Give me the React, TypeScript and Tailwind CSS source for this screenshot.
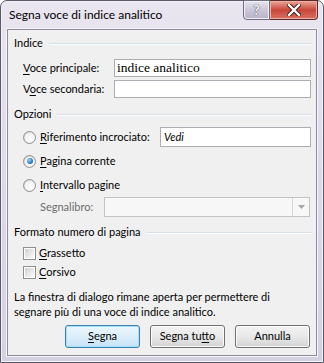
import React from 'react';

const font = "font-['Lato',sans-serif]";

function GroupHeader({ label }: { label: string }) {
  return (
    <div className="flex h-[16px] items-center pl-[6px] pr-[4px]">
      <span className="text-[11px] text-black">{label}</span>
      <div className="ml-[6px] flex-1 border-t border-[#d5dfe5] shadow-[0_1px_0_#ffffff]" />
    </div>
  );
}

function Radio({ checked }: { checked?: boolean }) {
  return (
    <div className="flex h-[13px] w-[13px] flex-none items-center justify-center rounded-full border border-[#929292] bg-gradient-to-br from-[#cfcfcf] to-[#fbfbfb]">
      <div className="flex h-[9px] w-[9px] items-center justify-center rounded-full bg-gradient-to-br from-[#f0f0f0] to-[#ffffff]">
        {checked && (
          <div className="h-[6px] w-[6px] rounded-full bg-[radial-gradient(circle_at_35%_35%,#9fd4fb,#2a78c2_60%,#0e4a86)]" />
        )}
      </div>
    </div>
  );
}

function Checkbox() {
  return (
    <div className="flex h-[13px] w-[13px] flex-none items-center justify-center border border-[#8e8f8f] bg-white">
      <div className="h-[9px] w-[9px] bg-gradient-to-br from-[#d2d2d2] to-[#fafafa]" />
    </div>
  );
}

function Key({ pre, k, post }: { pre?: string; k: string; post?: string }) {
  return (
    <span className="whitespace-nowrap">
      {pre}
      <span className="underline underline-offset-[2px]">{k}</span>
      {post}
    </span>
  );
}

function Button({ children, primary }: { children: React.ReactNode; primary?: boolean }) {
  return (
    <div
      className={
        'flex h-[23px] w-[75px] items-center justify-center rounded-[3px] border text-[11px] text-black ' +
        (primary
          ? 'border-[#3c7fb1] bg-gradient-to-b from-[#ebf6fd] via-[#dceefa] to-[#c4e3f7] shadow-[inset_0_0_0_1px_#a6e0ff]'
          : 'border-[#707070] bg-gradient-to-b from-[#f2f2f2] via-[#e9e9e9] to-[#d3d3d3] shadow-[inset_0_0_0_1px_#fcfcfc]')
      }
    >
      {children}
    </div>
  );
}

export default function App() {
  return (
    <div className={`h-[363px] w-[324px] bg-white ${font}`}>
      <div className="flex h-full w-full flex-col rounded-t-[7px] border border-[#59596a] bg-gradient-to-b from-[#e9e6f0] via-[#ddd9e7] to-[#d6d1e2] shadow-[inset_0_0_0_1px_#f4f2f8]">
        {/* Title bar */}
        <div className="relative flex h-[28px] items-center pl-[8px]">
          <span className="text-[12px] text-black">Segna voce di indice analitico</span>
          <div className="absolute right-[5px] top-[-1px] flex h-[20px]">
            <div className="flex w-[27px] items-center justify-center rounded-bl-[4px] border border-[#6f6c7e] bg-gradient-to-b from-[#e6e3ee] via-[#cbc7d8] to-[#b7b2c8] shadow-[inset_0_0_0_1px_#f2f0f7]">
              <span className="text-[14px] font-bold leading-none text-[#f5f5f8] [text-shadow:0_0_1px_#4a4a5a,0_0_1px_#4a4a5a]">?</span>
            </div>
            <div className="flex w-[48px] items-center justify-center rounded-br-[4px] border border-l-0 border-[#5b2a28] bg-gradient-to-b from-[#e8a596] via-[#c9453a] to-[#d7705f] shadow-[inset_0_0_0_1px_#eeb0a4]">
              <svg width="14" height="12" viewBox="0 0 14 12">
                <path d="M2 1 L12 11 M12 1 L2 11" stroke="#3a1512" strokeWidth="4.2" strokeLinecap="square" />
                <path d="M2 1 L12 11 M12 1 L2 11" stroke="#ffffff" strokeWidth="2.4" strokeLinecap="square" />
              </svg>
            </div>
          </div>
        </div>

        {/* Client area */}
        <div className="mx-[6px] mb-[6px] flex flex-1 flex-col border border-[#8d8b9b] bg-[#f0f0f0] text-[11px] text-black shadow-[0_0_0_1px_#f7f6fa]">
          <div className="mt-[5px]">
            <GroupHeader label="Indice" />
          </div>

          <div className="mt-[7px] flex h-[20px] items-center pl-[15px] pr-[5px]">
            <span className="w-[91px] flex-none"><Key k="V" post="oce principale:" /></span>
            <div className="flex h-[18px] flex-1 items-center border border-[#abadb3] bg-white pl-[2px] font-['Liberation_Serif',serif] text-[13.5px]">
              indice analitico
            </div>
          </div>
          <div className="mt-[1px] flex h-[20px] items-center pl-[15px] pr-[5px]">
            <span className="w-[91px] flex-none"><Key pre="V" k="o" post="ce secondaria:" /></span>
            <div className="h-[18px] flex-1 border border-[#abadb3] bg-white" />
          </div>

          <div className="mt-[7px]">
            <GroupHeader label="Opzioni" />
          </div>

          <div className="mt-[5px] flex h-[20px] items-center pl-[15px] pr-[5px]">
            <Radio />
            <span className="ml-[4px] w-[120px] flex-none"><Key k="R" post="iferimento incrociato:" /></span>
            <div className="flex h-[20px] flex-1 items-center border border-[#abadb3] bg-white pl-[3px] italic">
              Vedi
            </div>
          </div>
          <div className="mt-[4px] flex h-[20px] items-center pl-[15px]">
            <Radio checked />
            <span className="ml-[4px]"><Key k="P" post="agina corrente" /></span>
          </div>
          <div className="mt-[4px] flex h-[20px] items-center pl-[15px]">
            <Radio />
            <span className="ml-[4px]"><Key k="I" post="ntervallo pagine" /></span>
          </div>
          <div className="mt-[2px] flex h-[20px] items-center pl-[32px] pr-[6px]">
            <span className="w-[64px] flex-none text-[#6d6d6d]">Segnalibro:</span>
            <div className="flex h-[20px] flex-1 border border-[#c3c3c3] bg-[#f7f7f7]">
              <div className="flex-1" />
              <div className="flex w-[17px] items-center justify-center border-l border-[#d6d6d6]">
                <svg width="7" height="4" viewBox="0 0 7 4">
                  <path d="M0 0 H7 L3.5 4 Z" fill="#a8a8a8" />
                </svg>
              </div>
            </div>
          </div>

          <div className="mt-[7px]">
            <GroupHeader label="Formato numero di pagina" />
          </div>

          <div className="mt-[5px] flex h-[16px] items-center pl-[15px]">
            <Checkbox />
            <span className="ml-[3px]"><Key k="G" post="rassetto" /></span>
          </div>
          <div className="mt-[3px] flex h-[16px] items-center pl-[15px]">
            <Checkbox />
            <span className="ml-[3px]"><Key k="C" post="orsivo" /></span>
          </div>

          <div className="mt-[9px] pl-[6px] leading-[15px]">
            La finestra di dialogo rimane aperta per permettere di
            <br />
            segnare più di una voce di indice analitico.
          </div>

          <div className="mt-[6px] flex justify-end gap-[10px] pr-[6px]">
            <Button primary><Key k="S" post="egna" /></Button>
            <Button><Key pre="Segna tu" k="t" post="to" /></Button>
            <Button>Annulla</Button>
          </div>
        </div>
      </div>
    </div>
  );
}
